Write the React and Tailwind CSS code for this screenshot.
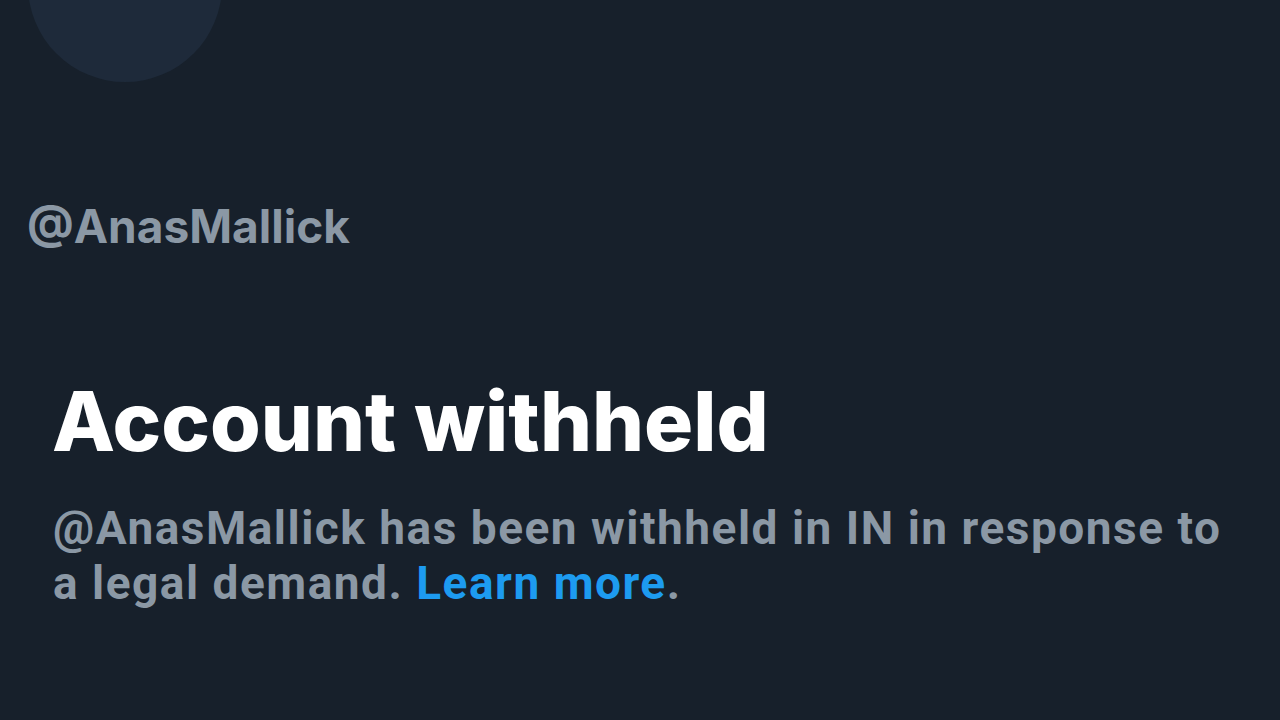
export default function App() {
  return (
    <div className="w-[1280px] h-[720px] overflow-hidden bg-[#17202b] flex flex-col" style={{ fontFamily: "Inter, 'Noto Sans', sans-serif" }}>
      <div className="ml-[28px] mt-[-112px] w-[194px] h-[194px] shrink-0 rounded-full bg-[#1e2a3a]" />
      <div className="ml-[27px] mt-[116px] text-[46px] leading-[56px] font-bold text-[#8b98a5]">
        @AnasMallick
      </div>
      <div className="ml-[52px] mt-[118px] text-[82px] leading-[100px] font-extrabold text-white">
        Account withheld
      </div>
      <p className="ml-[53px] mt-[29px] w-[1200px] text-[46px] leading-[55px] font-bold text-[#8b98a5] tracking-[1.5px]" style={{ fontFamily: "Roboto, 'Noto Sans', sans-serif" }}>
        @AnasMallick has been withheld in IN in response to a legal demand.{" "}
        <span className="text-[#1d9bf0]">Learn more</span>.
      </p>
    </div>
  );
}
